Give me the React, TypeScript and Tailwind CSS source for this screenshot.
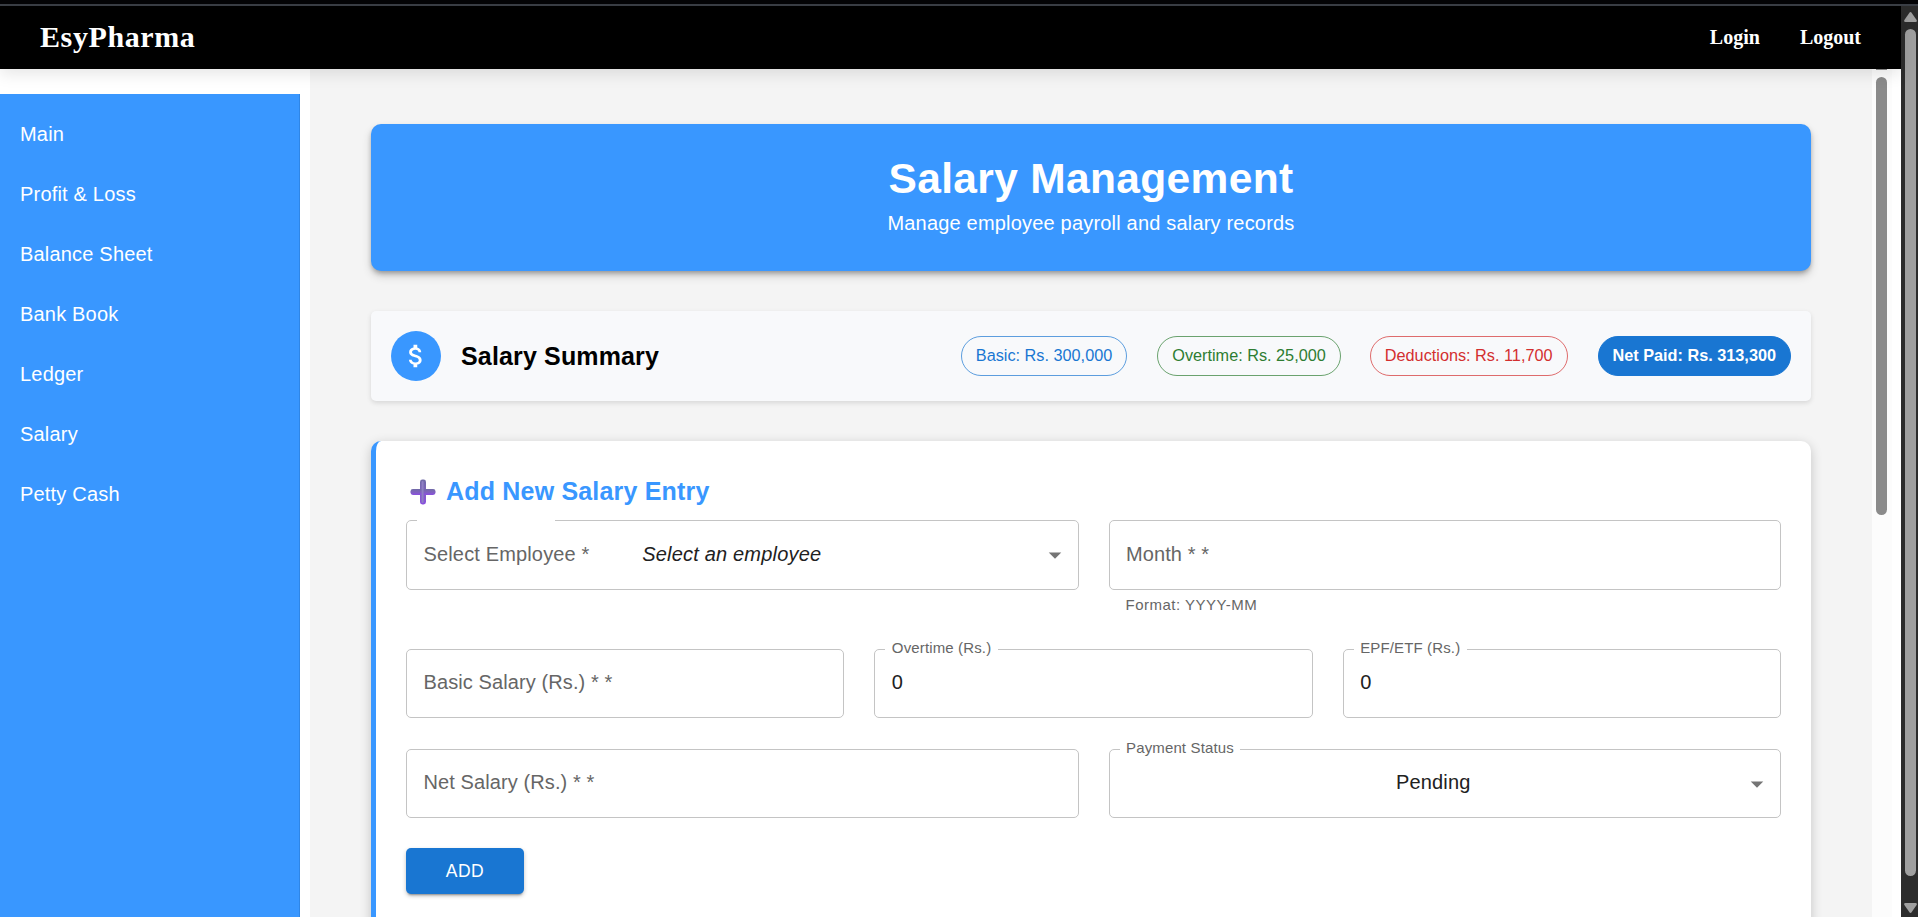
import type { ReactNode } from "react";

const navItems = ["Main", "Profit & Loss", "Balance Sheet", "Bank Book", "Ledger", "Salary", "Petty Cash"];

const chips = [
  { text: "Basic: Rs. 300,000", look: "border-[#1976d2]/70 text-[#1976d2]" },
  { text: "Overtime: Rs. 25,000", look: "-mr-px border-[#2e7d32]/70 text-[#2e7d32]" },
  { text: "Deductions: Rs. 11,700", look: "border-[#d32f2f]/70 text-[#d32f2f]" },
  { text: "Net Paid: Rs. 313,300", look: "border-[#1976d2] bg-[#1976d2] text-white font-bold" },
];

function DropArrow() {
  return (
    <svg viewBox="0 0 24 24" className="absolute right-[8px] top-1/2 h-[30px] w-[30px] -translate-y-1/2 fill-[#757575]">
      <path d="M7 10l5 5 5-5z" />
    </svg>
  );
}

function Field({ tall, children }: { tall?: boolean; children?: ReactNode }) {
  return (
    <div
      className={`relative flex items-center rounded-[5px] border border-[#c4c4c4] px-[16.5px] text-[20px] leading-[28px] tracking-[0.19px] text-[#212121] ${
        tall ? "h-[70px]" : "h-[69px]"
      }`}
    >
      {children}
    </div>
  );
}

function Placeholder({ text }: { text: string }) {
  return <span className="pb-[3px] tracking-[0.1px] text-[#666666]">{text}</span>;
}

function FloatingLabel({ text }: { text: string }) {
  return (
    <span className="absolute -top-[12px] left-[10px] whitespace-nowrap bg-white px-[6.5px] text-[15px] leading-[20px] tracking-[0.14px] text-[#666666]">
      {text}
    </span>
  );
}

function PlusIcon() {
  return (
    <svg viewBox="0 0 26 26" className="mt-px h-[26px] w-[26px]">
      <defs>
        <linearGradient id="plus" x1="0" y1="0" x2="0" y2="1">
          <stop offset="0" stopColor="#6f6aa6" />
          <stop offset="0.5" stopColor="#7f62bd" />
          <stop offset="1" stopColor="#8a4fe0" />
        </linearGradient>
      </defs>
      <rect x="10" y="0.5" width="6" height="25" rx="2.4" fill="url(#plus)" />
      <rect x="0.5" y="10" width="25" height="6" rx="2.4" fill="url(#plus)" />
      <rect x="11.6" y="2" width="2" height="22" rx="1" fill="#8f80c4" />
    </svg>
  );
}

export default function App() {
  return (
    <div className="flex h-[917px] w-[1918px] flex-col overflow-hidden bg-white font-['Liberation_Sans',Arial,sans-serif]">
      <div className="h-[6px] shrink-0 border-b-2 border-[#3b3f46] bg-[#040406]" />
      <div className="flex min-h-0 flex-1">
        <div className="flex min-w-0 flex-1 flex-col">
          <header className="relative z-10 flex h-[63px] shrink-0 items-center justify-between bg-black px-[40px] pb-px font-['Liberation_Serif','Times_New_Roman',serif] font-bold text-white shadow-[0_5px_15px_rgba(0,0,0,0.1)]">
            <span className="text-[30px] leading-[36px] tracking-[0.6px]">EsyPharma</span>
            <nav className="flex gap-[40px] text-[20px] leading-[24px]">
              <span>Login</span>
              <span>Logout</span>
            </nav>
          </header>
          <div className="flex min-h-0 flex-1">
            <aside className="mt-[25px] w-[300px] shrink-0 border-r border-[#2f86e6] bg-[#3997ff] pt-[10px]">
              {navItems.map((item) => (
                <div key={item} className="flex h-[60px] items-center px-[20px] pb-px text-[20px] tracking-[0.19px] text-white">
                  {item}
                </div>
              ))}
            </aside>
            <main className="ml-[10px] min-w-0 flex-1 overflow-hidden bg-[#f4f4f4] px-[61px] pt-[55px]">
              <section className="flex h-[147px] flex-col items-center rounded-[10px] bg-[#3997ff] pt-[29px] text-white shadow-[0_3px_5px_-1px_rgba(0,0,0,0.3),0_5px_10px_rgba(0,0,0,0.16)]">
                <h1 className="text-[42.5px] font-bold leading-[52px] tracking-[0.34px]">Salary Management</h1>
                <p className="mt-[3px] text-[20px] leading-[30px] tracking-[0.19px]">Manage employee payroll and salary records</p>
              </section>

              <section className="mt-[40px] flex h-[90px] items-center rounded-[5px] bg-[#f8f9fb] px-[20px] shadow-[0_2px_5px_rgba(0,0,0,0.12)]">
                <div className="flex h-[50px] w-[50px] items-center justify-center rounded-full bg-[#3997ff]">
                  <svg viewBox="0 0 24 24" className="h-[30px] w-[30px] fill-white">
                    <path d="M11.8 10.9c-2.27-.59-3-1.2-3-2.15 0-1.09 1.01-1.85 2.7-1.85 1.78 0 2.44.85 2.5 2.1h2.21c-.07-1.72-1.12-3.3-3.21-3.81V3h-3v2.16c-1.94.42-3.5 1.68-3.5 3.61 0 2.31 1.91 3.46 4.7 4.13 2.5.6 3 1.48 3 2.41 0 .69-.49 1.79-2.7 1.79-2.06 0-2.87-.92-2.98-2.1h-2.2c.12 2.19 1.76 3.42 3.68 3.83V21h3v-2.15c1.95-.37 3.5-1.5 3.5-3.55 0-2.84-2.43-3.81-4.7-4.4z" />
                  </svg>
                </div>
                <h2 className="ml-[20px] flex-1 text-[25px] font-bold leading-[40px] tracking-[0.15px] text-black">Salary Summary</h2>
                <div className="flex gap-[30px]">
                  {chips.map((chip) => (
                    <span
                      key={chip.text}
                      className={`flex h-[40px] items-center whitespace-nowrap rounded-full border px-[14px] pb-px text-[16.25px] ${chip.look}`}
                    >
                      {chip.text}
                    </span>
                  ))}
                </div>
              </section>

              <section className="mt-[40px] h-[520px] rounded-[10px] border-l-[5px] border-[#3997ff] bg-white pl-[30px] pr-[30px] pt-[30px] shadow-[0_3px_12px_rgba(0,0,0,0.2)]">
                <h2 className="flex h-[41px] items-center gap-[10px] pl-[4px] text-[25px] font-bold tracking-[0.19px] text-[#3997ff]">
                  <PlusIcon />
                  Add New Salary Entry
                </h2>
                <div className="mt-[8px] grid h-[129px] grid-cols-2 items-start gap-[30px]">
                  <Field tall>
                    <span className="absolute -top-px left-[10px] h-px w-[138px] bg-white" />
                    <span className="absolute left-[16.5px] top-1/2 -translate-y-1/2 pb-[3px] tracking-[0.15px] text-[#666666]">Select Employee *</span>
                    <em className="flex-1 pb-[2px] pr-[21px] text-center">Select an employee</em>
                    <DropArrow />
                  </Field>
                  <div>
                    <Field tall>
                      <Placeholder text="Month * *" />
                    </Field>
                    <p className="mt-[4px] px-[17px] text-[15px] leading-[22px] tracking-[0.5px] text-[#666666]">Format: YYYY-MM</p>
                  </div>
                </div>
                <div className="grid h-[100px] grid-cols-3 items-start gap-[30px]">
                  <Field>
                    <Placeholder text="Basic Salary (Rs.) * *" />
                  </Field>
                  <Field>
                    <FloatingLabel text="Overtime (Rs.)" />
                    <span className="pb-[3px]">0</span>
                  </Field>
                  <Field>
                    <FloatingLabel text="EPF/ETF (Rs.)" />
                    <span className="pb-[3px]">0</span>
                  </Field>
                </div>
                <div className="grid h-[99px] grid-cols-2 items-start gap-[30px]">
                  <Field>
                    <Placeholder text="Net Salary (Rs.) * *" />
                  </Field>
                  <Field>
                    <FloatingLabel text="Payment Status" />
                    <span className="flex-1 pb-[3px] pr-[23px] text-center">Pending</span>
                    <DropArrow />
                  </Field>
                </div>
                <button className="h-[46px] w-[118px] rounded-[5px] bg-[#1976d2] text-[17.5px] tracking-[0.5px] text-white shadow-[0_3px_2px_-2px_rgba(0,0,0,0.3),0_2px_4px_rgba(0,0,0,0.24)]">
                  ADD
                </button>
              </section>
            </main>
            <div className="flex w-[20px] shrink-0 flex-col bg-[#fcfcfc] pl-[4px]">
              <div className="h-px w-[11px] bg-[#8b8b8b]" />
              <div className="mt-[7px] h-[438px] w-[11px] rounded-full bg-[#8b8b8b]" />
            </div>
            <div className="w-[9px] shrink-0 bg-white" />
          </div>
        </div>
        <div className="flex w-[17px] shrink-0 flex-col items-start bg-[#2c2c2c]">
          <svg viewBox="0 0 13 10" className="ml-[3px] mt-[6px] h-[10px] w-[13px] shrink-0 fill-[#9f9f9f]">
            <path d="M5.4.7Q6.5-.5 7.6.7L12.6 8Q13.4 10 11.6 10H1.4Q-.4 10 .4 8Z" />
          </svg>
          <div className="ml-[4px] mt-[7px] h-[847px] w-[11px] shrink-0 rounded-full bg-[#9f9f9f]" />
          <svg viewBox="0 0 13 10" className="ml-[3px] mt-[27px] h-[10px] w-[13px] shrink-0 fill-[#9f9f9f]">
            <path d="M5.4 9.3Q6.5 10.5 7.6 9.3L12.6 2Q13.4 0 11.6 0H1.4Q-.4 0 .4 2Z" />
          </svg>
        </div>
      </div>
    </div>
  );
}
